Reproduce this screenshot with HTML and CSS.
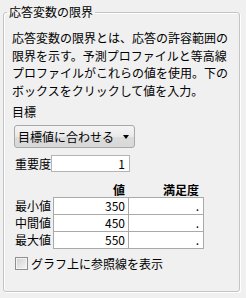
FILE: index.html
```html
<!DOCTYPE html>
<html lang="ja">
<head>
<meta charset="utf-8">
<link rel="stylesheet" href="styles.css">
</head>
<body>
<fieldset class="group">
  <legend class="group-title">応答変数の限界</legend>
  <p class="desc">応答変数の限界とは、応答の許容範囲の<br>限界を示す。予測プロファイルと等高線<br>プロファイルがこれらの値を使用。下の<br>ボックスをクリックして値を入力。</p>
  <div class="caption">目標</div>
  <div class="dropdown"><span class="dd-text">目標値に合わせる</span><span class="dd-arrow"></span></div>
  <div class="imp-row"><span class="imp-label">重要度</span><span class="imp-box">1</span></div>
  <div class="limits">
    <div class="lrow head">
      <span class="lbl"></span>
      <span class="hcell c1">値</span>
      <span class="hcell c2">満足度</span>
    </div>
    <div class="lrow">
      <span class="lbl">最小値</span>
      <span class="cell c1">350</span>
      <span class="cell c2">.</span>
    </div>
    <div class="lrow">
      <span class="lbl">中間値</span>
      <span class="cell c1">450</span>
      <span class="cell c2">.</span>
    </div>
    <div class="lrow">
      <span class="lbl">最大値</span>
      <span class="cell c1">550</span>
      <span class="cell c2">.</span>
    </div>
  </div>
  <div class="check-row"><span class="check"></span><span class="check-label">グラフ上に参照線を表示</span></div>
</fieldset>
</body>
</html>
```

FILE: styles.css
```css
html, body {
  margin: 0;
  padding: 0;
  background: #f0f0f0;
}
body {
  font-family: "Noto Sans CJK JP", "Noto Sans", sans-serif;
  font-size: 12px;
  color: #000;
  width: 246px;
  height: 298px;
  overflow: hidden;
}
.group {
  box-sizing: border-box;
  margin: 4px 0 0 3px;
  width: 237px;
  height: 288px;
  padding: 0 8px;
  border: 1px solid #c4c4c4;
  border-radius: 3px;
  box-shadow: 1px 1px 0 #fff, inset 1px 1px 0 #fff;
}
.group-title {
  margin-left: -5px;
  padding: 0 2px;
  line-height: 16px;
  font-size: 12px;
}
.desc {
  margin: 9px 0 0 0;
  line-height: 17.5px;
  white-space: nowrap;
}
.caption {
  margin-top: 4px;
  line-height: 17px;
}
.dropdown {
  box-sizing: border-box;
  margin: 5px 0 0 2px;
  width: 121px;
  height: 23px;
  border: 1px solid #a8a8a8;
  border-radius: 3px;
  background: linear-gradient(#f5f5f5, #e9e9e9 50%, #dcdcdc 51%, #d8d8d8);
  display: flex;
  align-items: center;
  padding-left: 3px;
}
.dd-text {
  line-height: 16px;
  white-space: nowrap;
}
.dd-arrow {
  margin-left: auto;
  margin-right: 5px;
  width: 0;
  height: 0;
  border-top: 4px solid #000;
  border-left: 3px solid transparent;
  border-right: 3px solid transparent;
}
.imp-row {
  margin-top: 7px;
  display: flex;
  height: 17px;
}
.imp-label {
  flex: 0 0 38px;
  padding-left: 3px;
  box-sizing: border-box;
  line-height: 17px;
  white-space: nowrap;
}
.imp-box {
  flex: 0 0 79px;
  box-sizing: border-box;
  height: 17px;
  border: 1px solid #b4b4b4;
  background: #fff;
  text-align: right;
  padding-right: 4px;
  line-height: 15px;
}
.limits {
  margin-top: 9px;
}
.lrow {
  display: flex;
  height: 18px;
  margin-top: -1px;
}
.lrow.head {
  height: 17px;
  margin-top: 0;
}
.lbl {
  flex: 0 0 41px;
  box-sizing: border-box;
  text-align: right;
  padding-right: 2px;
  line-height: 17px;
  white-space: nowrap;
}
.hcell {
  flex: 0 0 76px;
  box-sizing: border-box;
  text-align: right;
  font-weight: bold;
  line-height: 17px;
  white-space: nowrap;
}
.hcell.c1 { padding-right: 4px; }
.hcell.c2 { margin-left: -1px; padding-right: 5px; }
.cell {
  flex: 0 0 76px;
  box-sizing: border-box;
  height: 18px;
  border: 1px solid #a9a9a9;
  background: #fff;
  text-align: right;
  line-height: 15px;
}
.cell.c1 { padding-right: 3px; }
.cell.c2 { margin-left: -1px; padding-right: 4px; }
.check-row {
  margin-top: 6px;
  display: flex;
  align-items: center;
  height: 17px;
}
.check {
  flex: 0 0 13px;
  box-sizing: border-box;
  height: 13px;
  margin-left: 3px;
  margin-right: 3px;
  border: 1px solid #8e8f8f;
  background: linear-gradient(135deg, #d0d0d0, #f6f6f6);
  box-shadow: inset 0 0 0 1px #f4f4f4;
}
.check-label {
  line-height: 17px;
  white-space: nowrap;
}
```
